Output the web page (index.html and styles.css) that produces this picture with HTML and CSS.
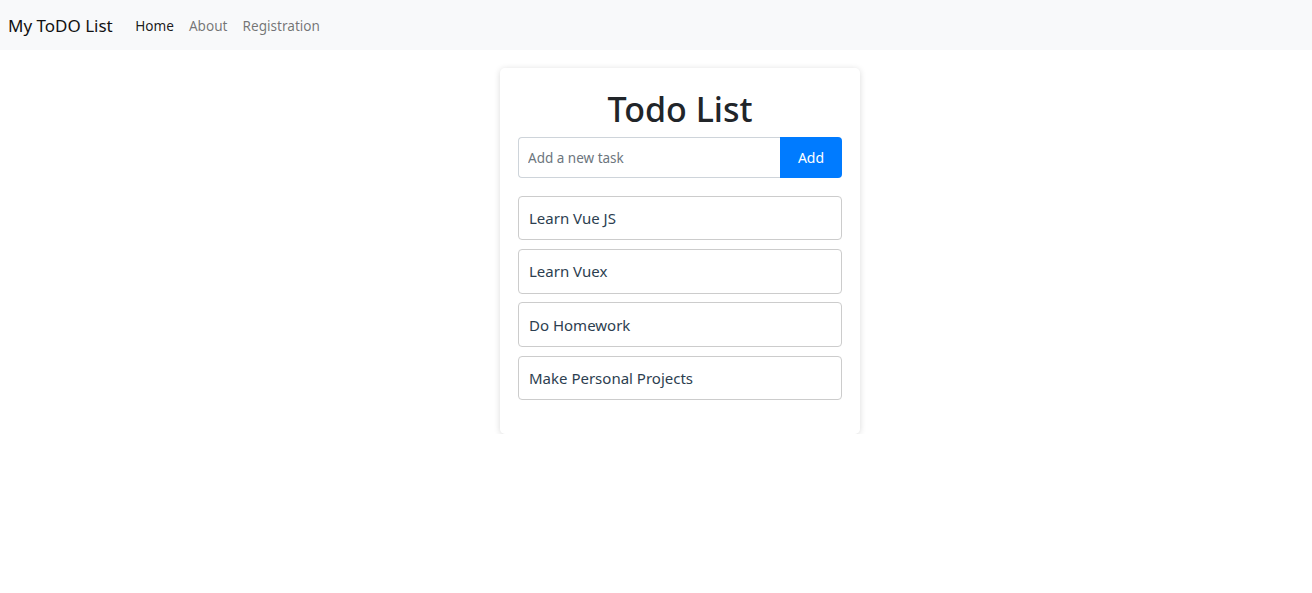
FILE: index.html
```html
<!DOCTYPE html>
<html lang="en">
<head>
<meta charset="utf-8">
<title>My ToDO List</title>
<link rel="stylesheet" href="styles.css">
</head>
<body>
<nav class="navbar">
  <a class="brand" href="#">My ToDO List</a>
  <ul class="nav">
    <li><a class="nav-link active" href="#">Home</a></li>
    <li><a class="nav-link" href="#">About</a></li>
    <li><a class="nav-link" href="#">Registration</a></li>
  </ul>
</nav>
<main class="main">
  <section class="card">
    <h1 class="title">Todo List</h1>
    <form class="add-form">
      <input class="task-input" type="text" placeholder="Add a new task">
      <button class="add-btn" type="button">Add</button>
    </form>
    <ul class="todo-list">
      <li class="todo-item">Learn Vue JS</li>
      <li class="todo-item">Learn Vuex</li>
      <li class="todo-item">Do Homework</li>
      <li class="todo-item">Make Personal Projects</li>
    </ul>
  </section>
</main>
</body>
</html>
```
FILE: styles.css
```css
* { box-sizing: border-box; }
html, body { margin: 0; padding: 0; }
body {
  font-family: "Noto Sans", "Open Sans", sans-serif;
  color: #212529;
  background: #fff;
}
.navbar {
  height: 50px;
  background: #f8f9fa;
  display: flex;
  align-items: center;
  padding: 0 8px;
}
.brand {
  font-size: 17px;
  color: #111;
  text-decoration: none;
  margin-right: 15px;
}
.nav {
  list-style: none;
  display: flex;
  margin: 0;
  padding: 0;
}
.nav-link {
  display: block;
  padding: 7px 7.5px;
  font-size: 13.6px;
  color: rgba(0,0,0,0.55);
  text-decoration: none;
}
.nav-link.active { color: rgba(0,0,0,0.9); }
.main {
  display: flex;
  justify-content: center;
  padding-top: 18px;
  padding-left: 48px;
}
.card {
  width: 360px;
  background: #fff;
  border-radius: 5px;
  box-shadow: 0 1px 6px rgba(0,0,0,0.15);
  padding: 21px 18px 34px;
}
.title {
  margin: 0 0 7px;
  text-align: center;
  font-size: 34px;
  font-weight: 500;
  line-height: 1.2;
  color: #212529;
}
.add-form {
  display: flex;
  height: 41px;
  margin-bottom: 18px;
}
.task-input {
  flex: 1;
  border: 1px solid #ced4da;
  border-right: none;
  border-radius: 4px 0 0 4px;
  padding: 1px 9px 0;
  font-family: inherit;
  font-size: 13.5px;
  color: #495057;
  outline: none;
}
.task-input::placeholder { color: #6c757d; }
.add-btn {
  width: 62px;
  border: none;
  background: #007bff;
  color: #fff;
  border-radius: 0 4px 4px 0;
  font-family: inherit;
  font-size: 14px;
}
.todo-list {
  list-style: none;
  margin: 0;
  padding: 0;
  display: flex;
  flex-direction: column;
  gap: 8.8px;
}
.todo-item {
  height: 44.5px;
  display: flex;
  align-items: center;
  padding: 0 10px;
  border: 1px solid #ccc;
  border-radius: 4px;
  font-size: 15px;
  color: #2c3e50;
}
```
